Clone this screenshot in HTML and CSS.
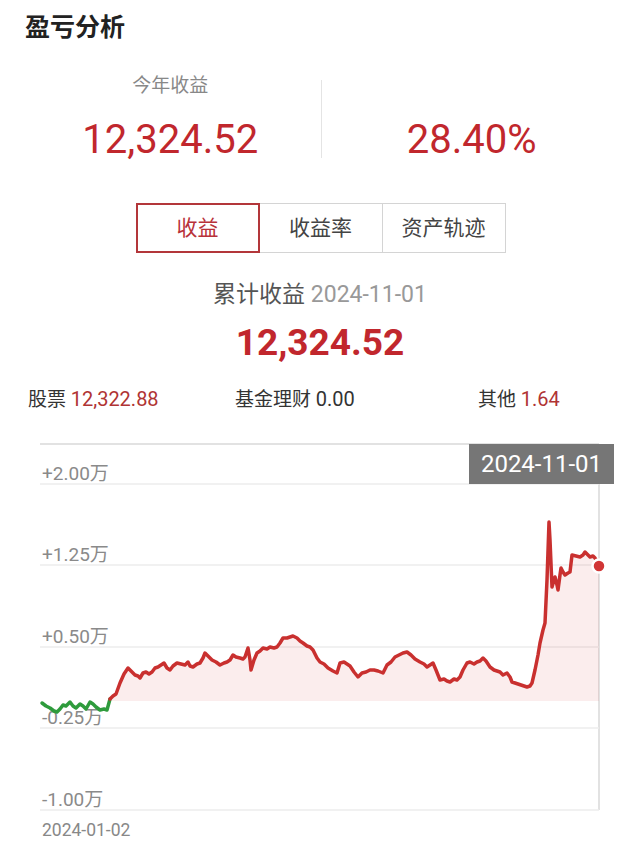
FILE: index.html
```html
<!DOCTYPE html>
<html lang="zh">
<head>
  <meta charset="utf-8" />
  <title>盈亏分析</title>
  <link rel="stylesheet" href="styles.css">
</head>
<body>
  <div class="page">
    <h1>盈亏分析</h1>

    <div class="summary">
      <div class="summary-col">
        <div class="summary-label">今年收益</div>
        <div class="summary-value">12,324.52</div>
      </div>
      <div class="summary-divider"></div>
      <div class="summary-col">
        <div class="summary-label"></div>
        <div class="summary-value">28.40%</div>
      </div>
    </div>

    <div class="tabs">
      <div class="tab active">收益</div>
      <div class="tab">收益率</div>
      <div class="tab">资产轨迹</div>
    </div>

    <div class="total-label">累计收益 <span class="total-date">2024-11-01</span></div>
    <div class="total-value">12,324.52</div>

    <div class="stats">
      <div class="stat">股票 <span class="num up">12,322.88</span></div>
      <div class="stat">基金理财 <span class="num">0.00</span></div>
      <div class="stat">其他 <span class="num up">1.64</span></div>
    </div>

    <div class="chart">
      <svg class="chart-svg" viewBox="0 430 640 425" width="640" height="425">
        <!-- grid -->
        <line x1="40" y1="444" x2="599" y2="444" class="frame" />
        <line x1="599" y1="444" x2="599" y2="810" class="frame" />
        <line x1="40" y1="484" x2="599" y2="484" class="grid" />
        <line x1="40" y1="565" x2="599" y2="565" class="grid" />
        <line x1="40" y1="647" x2="599" y2="647" class="grid" />
        <line x1="40" y1="728" x2="599" y2="728" class="grid" />
        <line x1="40" y1="810" x2="599" y2="810" class="grid" />

        <text x="42" y="480" class="axis">+2.00万</text>
        <text x="42" y="561" class="axis">+1.25万</text>
        <text x="42" y="643" class="axis">+0.50万</text>
        <text x="42" y="724" class="axis">-0.25万</text>
        <text x="42" y="806" class="axis">-1.00万</text>
        <text x="42" y="836" class="axis-x">2024-01-02</text>

        <path class="area" d="M110,699 L113,696 116,694 120,683 124,674 128,668 132,672 135,675 138,676 140,678 143,673 146,672 149,674 152,672 155,668 158,667 161,665 164,663 167,668 170,670 173,666 177,663 181,664 185,665 188,662 190,666 193,667 197,664 200,663 203,658 205,653 208,656 212,660 216,662 220,665 224,663 227,662 230,660 233,655 236,657 240,658 243,659 245,657 248,648 250,660 251,670 254,660 257,653 260,651 263,648 267,649 270,647 274,648 277,647 280,643 283,638 287,638 290,637 293,636 297,638 300,641 303,643 307,646 310,647 313,650 317,658 320,662 324,664 328,668 333,671 337,673 340,663 344,662 347,664 350,666 354,672 358,677 362,673 366,672 370,670 374,670 378,671 383,673 387,665 391,662 395,657 399,655 403,653 407,652 411,655 415,659 420,662 424,664 427,667 430,665 433,663 436,670 440,680 444,679 447,681 450,682 454,679 457,680 460,677 463,670 467,663 470,662 474,664 477,662 480,661 483,658 486,661 490,667 494,670 497,671 500,672 503,675 507,673 510,677 512,682 515,683 518,684 521,685 524,686 527,687 530,686 532,683 535,670 538,655 540,643 543,630 545,623 547,580 549,522 550,540 552,587 554,580 555,577 557,585 558,590 560,575 561,568 563,572 565,575 568,573 570,572 572,555 576,556 580,557 583,555 585,552 588,555 590,557 593,556 595,558 599,566 L599,701 L110,701 Z" />

        <polyline class="line-down" points="42,703 46,706 50,708 54,711 57,712 60,709 63,705 66,706 70,702 73,706 76,708 80,704 83,706 86,709 90,702 93,704 96,707 100,710 104,709 107,710 110,699" />
        <polyline class="line-up" points="110,699 113,696 116,694 120,683 124,674 128,668 132,672 135,675 138,676 140,678 143,673 146,672 149,674 152,672 155,668 158,667 161,665 164,663 167,668 170,670 173,666 177,663 181,664 185,665 188,662 190,666 193,667 197,664 200,663 203,658 205,653 208,656 212,660 216,662 220,665 224,663 227,662 230,660 233,655 236,657 240,658 243,659 245,657 248,648 250,660 251,670 254,660 257,653 260,651 263,648 267,649 270,647 274,648 277,647 280,643 283,638 287,638 290,637 293,636 297,638 300,641 303,643 307,646 310,647 313,650 317,658 320,662 324,664 328,668 333,671 337,673 340,663 344,662 347,664 350,666 354,672 358,677 362,673 366,672 370,670 374,670 378,671 383,673 387,665 391,662 395,657 399,655 403,653 407,652 411,655 415,659 420,662 424,664 427,667 430,665 433,663 436,670 440,680 444,679 447,681 450,682 454,679 457,680 460,677 463,670 467,663 470,662 474,664 477,662 480,661 483,658 486,661 490,667 494,670 497,671 500,672 503,675 507,673 510,677 512,682 515,683 518,684 521,685 524,686 527,687 530,686 532,683 535,670 538,655 540,643 543,630 545,623 547,580 549,522 550,540 552,587 554,580 555,577 557,585 558,590 560,575 561,568 563,572 565,575 568,573 570,572 572,555 576,556 580,557 583,555 585,552 588,555 590,557 593,556 595,558 599,566" />

        <circle cx="599" cy="566" r="6.5" class="dot" />
      </svg>
      <div class="tooltip">2024-11-01</div>
    </div>
  </div>
</body>
</html>
```

FILE: styles.css
```css
* {
  box-sizing: border-box;
}

body {
  margin: 0;
  background: #fff;
  font-family: Roboto, "Noto Sans CJK SC", sans-serif;
  color: #333;
}

.page {
  width: 640px;
  padding-top: 12px;
}

h1 {
  margin: 0 0 0 25px;
  font-size: 25px;
  line-height: 32px;
  font-weight: bold;
  color: #222;
}

.summary {
  display: grid;
  grid-template-columns: 1fr 1px 1fr;
  align-items: center;
  margin: 29px 18px 0 20px;
}

.summary-col {
  text-align: center;
}

.summary-label {
  height: 26px;
  line-height: 26px;
  font-size: 19px;
  color: #888;
}

.summary-value {
  margin-top: 17px;
  line-height: 48px;
  font-size: 40px;
  color: #c1272d;
}

.summary-divider {
  height: 78px;
  background: #e4e4e4;
}

.tabs {
  display: flex;
  justify-content: center;
  margin: 39px 0 0 2px;
}

.tab {
  width: 124px;
  height: 50px;
  margin-left: -1px;
  border: 1px solid #d4d4d4;
  font-size: 21px;
  line-height: 48px;
  text-align: center;
  color: #444;
}

.tab.active {
  position: relative;
  z-index: 1;
  border: 2px solid #b3363a;
  line-height: 46px;
  color: #b8323a;
}

.total-label {
  margin-top: 27px;
  font-size: 23px;
  line-height: 30px;
  text-align: center;
  color: #555;
}

.total-date {
  color: #999;
}

.total-value {
  margin-top: 11px;
  font-size: 37px;
  line-height: 44px;
  font-weight: bold;
  text-align: center;
  color: #c1272d;
}

.stats {
  display: grid;
  grid-template-columns: 207px 243px auto;
  margin: 21px 0 0 28px;
  font-size: 19px;
  line-height: 26px;
  color: #333;
}

.stat .num {
  font-size: 20px;
}

.stat .up {
  color: #b03434;
}

.chart {
  position: relative;
  margin-top: 17px;
  height: 425px;
}

.chart-svg {
  display: block;
}

.frame {
  stroke: #d8d8d8;
  stroke-width: 1.5;
}

.grid {
  stroke: #ececec;
  stroke-width: 1.5;
}

.axis {
  font-family: Roboto, "Noto Sans CJK SC", sans-serif;
  font-size: 19px;
  fill: #8a8a8a;
}

.axis-x {
  font-family: Roboto, sans-serif;
  font-size: 17.5px;
  fill: #888;
}

.area {
  fill: rgba(214, 60, 60, 0.09);
}

.line-up,
.line-down {
  fill: none;
  stroke-width: 3.5;
  stroke-linejoin: round;
  stroke-linecap: round;
}

.line-up {
  stroke: #c9302f;
}

.line-down {
  stroke: #2e9b3c;
}

.dot {
  fill: #d13636;
  stroke: #fff;
  stroke-width: 2.5;
}

.tooltip {
  position: absolute;
  left: 469px;
  top: 14px;
  width: 145px;
  height: 40px;
  background: #767676;
  color: #fff;
  font-size: 24px;
  line-height: 40px;
  text-align: center;
}
```
